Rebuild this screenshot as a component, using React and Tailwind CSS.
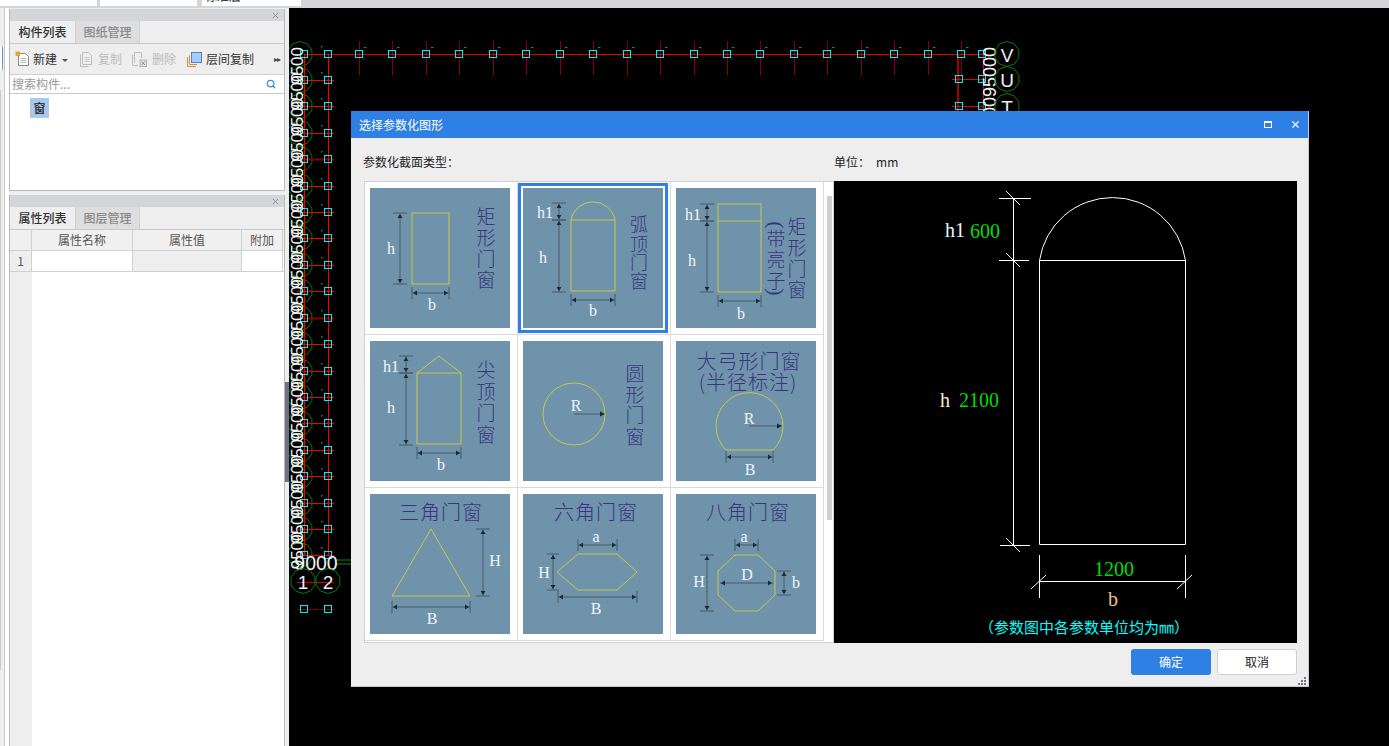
import React from 'react';
import { Search, X } from 'lucide-react';

const UI = { fontFamily: '"Noto Sans CJK SC", "Liberation Sans", sans-serif' };
const SERIF = '"Liberation Serif", "Noto Sans CJK SC", serif';
const CJK = '"Noto Sans CJK SC", sans-serif';

const YEL = '#c9c84a';
const DIM = '#465c6b';
const HEAD = '#1c2a30';

// dimension line, horizontal, with ticks and arrow heads
const HDim = ({ x1, x2, y, t = 6 }) => (
  <g>
    <line x1={x1} x2={x1} y1={y - t} y2={y + t} stroke={DIM} />
    <line x1={x2} x2={x2} y1={y - t} y2={y + t} stroke={DIM} />
    <line x1={x1} x2={x2} y1={y} y2={y} stroke={DIM} />
    <polygon points={`${x1 + 1},${y} ${x1 + 5},${y - 2.5} ${x1 + 5},${y + 2.5}`} fill={HEAD} />
    <polygon points={`${x2 - 1},${y} ${x2 - 5},${y - 2.5} ${x2 - 5},${y + 2.5}`} fill={HEAD} />
  </g>
);

const VDim = ({ x, y1, y2, t = 7 }) => (
  <g>
    <line x1={x - t} x2={x + t} y1={y1} y2={y1} stroke={DIM} />
    <line x1={x - t} x2={x + t} y1={y2} y2={y2} stroke={DIM} />
    <line x1={x} x2={x} y1={y1} y2={y2} stroke={DIM} />
    <polygon points={`${x},${y1 + 1} ${x - 2.5},${y1 + 5} ${x + 2.5},${y1 + 5}`} fill={HEAD} />
    <polygon points={`${x},${y2 - 1} ${x - 2.5},${y2 - 5} ${x + 2.5},${y2 - 5}`} fill={HEAD} />
  </g>
);

const L = ({ x, y, children, size = 16 }) => (
  <text x={x} y={y} fill="#f2f5f7" fontSize={size} fontFamily={SERIF} textAnchor="middle" dominantBaseline="central">
    {children}
  </text>
);

// purple caption; one glyph per y when stacked
const Cap = ({ x, ys, chars, size = 19 }) => (
  <g fill="#39357f" fontSize={size} fontFamily={CJK} fontWeight="300" textAnchor="middle" dominantBaseline="central">
    {chars.split('').map((c, i) => (
      <text key={i} x={x} y={ys[i]}>{c}</text>
    ))}
  </g>
);

const Title = ({ x, y, children, size = 20 }) => (
  <text x={x} y={y} fill="#39357f" fontSize={size} fontFamily={CJK} fontWeight="300" textAnchor="middle" dominantBaseline="central" letterSpacing="1">
    {children}
  </text>
);

const tiles = [
  <g key="a">
    <rect x="42" y="25" width="37" height="71" fill="none" stroke={YEL} />
    <VDim x={30} y1={25} y2={96} />
    <L x={21} y={60}>h</L>
    <HDim x1={42} x2={79} y={105} />
    <L x={62} y={116}>b</L>
    <Cap x={116} ys={[27, 48, 69, 90]} chars="矩形门窗" />
  </g>,
  <g key="b">
    <path d="M48 32 A22.4 22.4 0 0 1 92 32 V103 H48 Z M48 32 H92" fill="none" stroke={YEL} />
    <VDim x={36} y1={15} y2={32} />
    <VDim x={36} y1={32} y2={104} />
    <L x={22} y={24}>h1</L>
    <L x={20} y={69}>h</L>
    <HDim x1={48} x2={92} y={112} />
    <L x={70} y={122}>b</L>
    <Cap x={116} ys={[35, 55, 73, 92]} chars="弧顶门窗" size={18} />
  </g>,
  <g key="c">
    <path d="M42 16 H85 V104 H42 Z M42 33 H85" fill="none" stroke={YEL} />
    <VDim x={31} y1={16} y2={33} />
    <VDim x={31} y1={33} y2={104} />
    <L x={17} y={26}>h1</L>
    <L x={16} y={72}>h</L>
    <HDim x1={42} x2={85} y={113} />
    <L x={65} y={125}>b</L>
    <Cap x={121} ys={[37, 58, 79, 100]} chars="矩形门窗" />
    <Cap x={100} ys={[49, 70, 91]} chars="带亮子" />
    <text x="100" y="37" transform="rotate(90 100 37)" fill="#39357f" fontSize="22" fontFamily={SERIF} textAnchor="middle" dominantBaseline="central">(</text>
    <text x="100" y="104" transform="rotate(90 100 104)" fill="#39357f" fontSize="22" fontFamily={SERIF} textAnchor="middle" dominantBaseline="central">)</text>
  </g>,
  <g key="d">
    <path d="M47 32 L69 15 L91 32 V103 H47 Z M47 32 H91" fill="none" stroke={YEL} />
    <VDim x={36} y1={15} y2={32} />
    <VDim x={36} y1={32} y2={104} />
    <L x={21} y={25}>h1</L>
    <L x={21} y={66}>h</L>
    <HDim x1={47} x2={91} y={112} />
    <L x={71} y={123}>b</L>
    <Cap x={116} ys={[27, 49, 70, 92]} chars="尖顶门窗" />
  </g>,
  <g key="e">
    <circle cx="51" cy="73" r="31" fill="none" stroke={YEL} />
    <L x={53} y={64}>R</L>
    <line x1="51" x2="80" y1="73" y2="73" stroke={DIM} />
    <polygon points="82,73 77,70.5 77,75.5" fill={HEAD} />
    <Cap x={112} ys={[31, 52, 72, 94]} chars="圆形门窗" />
  </g>,
  <g key="f">
    <path d="M50 109 A33.5 33.5 0 1 1 97 109 Z" fill="none" stroke={YEL} />
    <L x={73} y={77}>R</L>
    <line x1="73" x2="104" y1="85" y2="85" stroke={DIM} />
    <polygon points="106,85 101,82.5 101,87.5" fill={HEAD} />
    <HDim x1={50} x2={97} y={116} />
    <L x={74} y={128}>B</L>
    <Title x={73} y={19}>大弓形门窗</Title>
    <Title x={72} y={40}>(半径标注)</Title>
  </g>,
  <g key="g">
    <polygon points="61,35 100,102 22,102" fill="none" stroke={YEL} />
    <VDim x={113} y1={35} y2={102} />
    <L x={125} y={66}>H</L>
    <HDim x1={22} x2={100} y={113} />
    <L x={62} y={124}>B</L>
    <Title x={71} y={17}>三角门窗</Title>
  </g>,
  <g key="h">
    <polygon points="34,78 55,60 94,60 114,78 94,96 55,96" fill="none" stroke={YEL} />
    <HDim x1={55} x2={94} y={51} />
    <L x={73} y={42}>a</L>
    <VDim x={30} y1={60} y2={96} t={6} />
    <L x={21} y={78}>H</L>
    <HDim x1={35} x2={114} y={103} />
    <L x={73} y={114}>B</L>
    <Title x={73} y={17}>六角门窗</Title>
  </g>,
  <g key="i">
    <polygon points="59,61 82,61 99,77 99,101 82,117 59,117 42,101 42,77" fill="none" stroke={YEL} />
    <HDim x1={59} x2={82} y={51} />
    <L x={68} y={42}>a</L>
    <VDim x={31} y1={61} y2={117} />
    <L x={23} y={87}>H</L>
    <L x={71} y={80}>D</L>
    <HDim x1={44} x2={97} y={89} t={0} />
    <VDim x={108} y1={77} y2={101} />
    <L x={120} y={88}>b</L>
    <Title x={72} y={17}>八角门窗</Title>
  </g>,
];

const topXs = Array.from({ length: 19 }, (_, i) => Math.round(359 + i * 33.45));
const rowYs = Array.from({ length: 20 }, (_, i) => Math.round(53.5 + i * 26.42));

const ngon = (cx, cy, r, n = 10) =>
  Array.from({ length: n }, (_, i) => {
    const a = (i / n) * Math.PI * 2 + Math.PI / n;
    return `${cx + r * Math.cos(a)},${cy + r * Math.sin(a)}`;
  }).join(' ');

const Sq = ({ x, y }) => (
  <rect x={x - 3.5} y={y - 3.5} width="7" height="7" fill="none" stroke="#00f0f8" strokeWidth="1" shapeRendering="crispEdges" />
);

const Bubble = ({ x, y, label }) => (
  <g>
    <polygon points={ngon(x, y, 12.5)} fill="none" stroke="#0a7a0a" />
    <text x={x} y={y + 1} fill="#eee" fontSize="19" fontFamily='"Liberation Sans", sans-serif' textAnchor="middle" dominantBaseline="central">
      {label}
    </text>
  </g>
);

const CadPlan = () => (
  <svg className="block h-full w-full" viewBox="289 8 1100 738">
    {/* axis bubbles on the left */}
    {rowYs.map((y) => (
      <polygon key={y} points={ngon(300, y, 12.5)} fill="none" stroke="#0a7a0a" />
    ))}
    {/* top row */}
    {topXs.map((x) => (
      <line key={x} x1={x + 0.5} x2={x + 0.5} y1="41" y2="75" stroke="#860000" />
    ))}
    <line x1="304" x2="985" y1="54.5" y2="54.5" stroke="#e00000" />
    {/* row lines */}
    {rowYs.slice(1).map((y, i) => (
      <line key={y} x1="297" x2="334" y1={y + 0.5} y2={y + 0.5} stroke={i === 3 || i === 9 ? '#8a0000' : '#f00000'} strokeWidth={i === 3 || i === 9 ? 2 : 1} />
    ))}
    <line x1="304.5" x2="304.5" y1="54" y2="556" stroke="#f00000" />
    <line x1="328.5" x2="328.5" y1="54" y2="556" stroke="#f00000" />
    <line x1="958" x2="958" y1="54" y2="112" stroke="#a00000" strokeWidth="2" />
    <line x1="983.5" x2="983.5" y1="54" y2="112" stroke="#d00000" />
    <line x1="952" x2="985" y1="79.5" y2="79.5" stroke="#e00000" />
    <line x1="952" x2="985" y1="106.5" y2="106.5" stroke="#e00000" />
    {/* column markers */}
    {rowYs.map((y) => (
      <g key={y}>
        <Sq x={304} y={y} />
        <Sq x={328} y={y} />
        <rect x="321" y={y - 8} width="1.5" height="1.5" fill="#0d8a8a" />
      </g>
    ))}
    {topXs.map((x) => (
      <g key={x}>
        <Sq x={x} y={54} />
        <rect x={x + 5} y="47" width="2.5" height="1" fill="#0d8a8a" />
      </g>
    ))}
    <Sq x={982} y={54} />
    <Sq x={959} y={79} />
    <Sq x={982} y={79} />
    <Sq x={959} y={106} />
    <Sq x={982} y={106} />
    {/* rotated dimension text */}
    <g fill="#f2f2f2" fontSize="17" fontFamily='"Liberation Sans", sans-serif' textAnchor="end">
      {rowYs.map((y, i) => (
        <text key={y} x="303" y={47 + i * 25.5} transform={`rotate(-90 303 ${47 + i * 25.5})`}>9500</text>
      ))}
      <text x="996" y="47" fontSize="18" transform="rotate(-90 996 47)">9500095000</text>
    </g>
    {/* bottom end */}
    <line x1="335" x2="351" y1="560" y2="560" stroke="#0a8a0a" />
    <line x1="335" x2="351" y1="564" y2="564" stroke="#0a8a0a" />
    <text x="316" y="570" fill="#f2f2f2" fontSize="19.5" fontFamily='"Liberation Sans", sans-serif' textAnchor="middle">9000</text>
    <line x1="297" x2="334" y1="582.5" y2="582.5" stroke="#d00000" />
    <Bubble x={303} y={581} label="1" />
    <Bubble x={328} y={581} label="2" />
    <line x1="297" x2="335" y1="609.5" y2="609.5" stroke="#700000" />
    <Sq x={304} y={609} />
    <Sq x={328} y={609} />
    <Bubble x={1007} y={54} label="V" />
    <Bubble x={1007} y={79} label="U" />
    <Bubble x={1007} y={106} label="T" />
  </svg>
);

const Preview = () => (
  <svg className="block h-full w-full" viewBox="834 181 463 462">
    <g stroke="#fff" fill="none">
      <path d="M1039.5 260.5 A73.8 73.8 0 0 1 1185.5 260.5" />
      <path d="M1039.5 260.5 H1185.5 V544.5 H1039.5 Z" />
      <path d="M1013.5 198 V546" />
      <path d="M999 198.5 H1031 M999 260.5 H1029 M1000 545.5 H1030" />
      <path d="M1006 191 L1020 205 M1006 253 L1020 267 M1006 538 L1020 552" />
      <path d="M1039.5 581.5 H1185.5 M1039.5 555 V598 M1185.5 555 V598" />
      <path d="M1031 589 L1046 575 M1177 589 L1192 575" />
    </g>
    <g fontFamily={SERIF} fontSize="20" dominantBaseline="central">
      <text x="945" y="230" fill="#e8f4ff">h1</text>
      <text x="970" y="231" fill="#00dc00">600</text>
      <text x="940" y="400" fill="#ffe9c8">h</text>
      <text x="959" y="400" fill="#00dc00">2100</text>
      <text x="1094" y="569" fill="#00dc00">1200</text>
      <text x="1108" y="599" fill="#f2c08a">b</text>
    </g>
    <text x="1084" y="626" fill="#00ffff" fontSize="15" fontFamily={CJK} textAnchor="middle" dominantBaseline="central">
      （参数图中各参数单位均为㎜）
    </text>
  </svg>
);

const PanelHead = () => (
  <div className="flex h-[12px] items-center justify-end bg-[#d3d5d9] pr-[4px]">
    <X size={9} strokeWidth={2.5} className="text-[#8a8f96]" />
  </div>
);

const Tabs = ({ active, other }) => (
  <div className="flex h-[23px] border-b border-[#c9c9c9] bg-[#eeeeee] text-[12px] font-medium">
    <div className="flex w-[65px] items-center justify-center text-[#333]">{active}</div>
    <div className="flex w-[65px] items-center justify-center border-x border-[#d0d0d0] bg-[#dedede] text-[#8a8a8a]">{other}</div>
  </div>
);

const ToolIcon = ({ kind }) => {
  if (kind === 'new') {
    return (
      <svg width="15" height="16" viewBox="0 0 15 16">
        <path d="M3.5 2.5 H10.5 L13.5 5.5 V14.5 H3.5 Z" fill="#fff" stroke="#8a8a8a" />
        <path d="M5.5 7.5 H11.5 M5.5 9.5 H11.5 M5.5 11.5 H11.5" stroke="#b5b5b5" />
        <rect x="0.5" y="0.5" width="4.5" height="4.5" fill="#f0a030" />
      </svg>
    );
  }
  if (kind === 'copy') {
    return (
      <svg width="13" height="15" viewBox="0 0 13 15">
        <path d="M0.5 2.5 V14.5 H8.5 M2.5 0.5 H8.5 L11.5 3.5 V12.5 H2.5 Z" fill="none" stroke="#bdbdbd" />
        <path d="M4.5 5.5 H9.5 M4.5 7.5 H9.5 M4.5 9.5 H9.5" stroke="#c8c8c8" />
      </svg>
    );
  }
  if (kind === 'del') {
    return (
      <svg width="15" height="15" viewBox="0 0 15 15">
        <path d="M0.5 2.5 V13.5 H6 M2.5 0.5 H9.5 V6 M2.5 0.5 V11" fill="none" stroke="#bdbdbd" />
        <rect x="8" y="8" width="6.5" height="6.5" fill="#e2e2e2" stroke="#b5b5b5" />
        <path d="M9.5 9.5 L13 13 M13 9.5 L9.5 13" stroke="#8f8f8f" />
      </svg>
    );
  }
  return (
    <svg width="15" height="15" viewBox="0 0 15 15">
      <path d="M0.5 5 V14.5 H9 M2.5 3.5 V12.5 H10" fill="none" stroke="#e08a3c" />
      <rect x="4.5" y="0.5" width="10" height="10" fill="#a9cdf2" stroke="#4f86c6" />
    </svg>
  );
};

const Sidebar = () => (
  <div className="flex w-[289px] shrink-0 bg-[#eeeeee]">
    <div className="flex w-[5px] shrink-0 flex-col border-r border-[#c9c9c9] bg-[#eeeeee] pt-[38px]">
      <div className="h-[24px] w-[3px] rounded-r-[2px] border-r border-[#5b9bd5] bg-white" />
      <div className="mt-[20px] h-[580px] w-px bg-[#c9c9c9]" />
    </div>
    <div className="w-[4px] shrink-0 bg-white" />
    <div className="flex w-[276px] shrink-0 flex-col pt-px">
      {/* component list */}
      <div className="flex h-[182px] flex-col border-x border-b border-[#b9b9b9] bg-white">
        <PanelHead />
        <Tabs active="构件列表" other="图纸管理" />
        <div className="flex h-[31px] items-center border-b border-[#d0d0d0] bg-[#eeeeee] pl-[5px] text-[12px]">
          <ToolIcon kind="new" />
          <span className="ml-[3px] text-[#333]">新建</span>
          <span className="ml-[5px] mt-[2px] h-0 w-0 border-x-[3px] border-t-[3px] border-x-transparent border-t-[#555]" />
          <span className="ml-[12px] flex"><ToolIcon kind="copy" /></span>
          <span className="ml-[5px] text-[#bdbdbd]">复制</span>
          <span className="ml-[10px] flex"><ToolIcon kind="del" /></span>
          <span className="ml-[5px] text-[#bdbdbd]">删除</span>
          <span className="ml-[11px] flex"><ToolIcon kind="copyLayer" /></span>
          <span className="ml-[4px] text-[#333]">层间复制</span>
          <span className="ml-[20px] text-[8px] tracking-[-1px] text-[#444]">▸▸</span>
        </div>
        <div className="flex h-[19px] items-center justify-between border-b border-[#c9c9c9] bg-white pl-[2px] pr-[8px] text-[12px] text-[#999]">
          <span>搜索构件...</span>
          <Search size={10} strokeWidth={3} className="text-[#3f8fd0]" />
        </div>
        <div className="flex-1 pl-[20px] pt-[4px] text-[12px]">
          <div className="flex h-[20px] w-[19px] items-center justify-center bg-[#aac8ec] font-medium text-[#222]">窗</div>
        </div>
      </div>
      {/* properties */}
      <div className="mt-[4px] flex flex-1 flex-col border-x border-[#b9b9b9] bg-white">
        <PanelHead />
        <Tabs active="属性列表" other="图层管理" />
        <div className="flex h-[21px] border-b border-[#d0d0d0] bg-[#f0f0f0] text-center text-[12px] leading-[20px] text-[#555]">
          <div className="w-[22px] border-r border-[#d0d0d0]" />
          <div className="w-[101px] border-r border-[#d0d0d0]">属性名称</div>
          <div className="w-[109px] border-r border-[#d0d0d0]">属性值</div>
          <div className="w-[41px] border-r border-[#d0d0d0]">附加</div>
        </div>
        <div className="flex h-[21px] border-b border-[#d0d0d0] text-center text-[12px] leading-[20px] text-[#555]">
          <div className="w-[22px] border-r border-[#d0d0d0] bg-[#eeeeee]">1</div>
          <div className="w-[101px] border-r border-[#d0d0d0] bg-white" />
          <div className="w-[109px] border-r border-[#d0d0d0] bg-[#eeeeee]" />
          <div className="w-[41px] border-r border-[#d0d0d0] bg-white" />
        </div>
        <div className="w-[22px] flex-1 bg-[#eeeeee]" />
      </div>
    </div>
    {/* splitter */}
    <div className="flex w-[4px] shrink-0 flex-col pt-[374px]">
      <div className="h-[100px] bg-[#6b7280]" />
    </div>
  </div>
);

const Dialog = () => (
  <div className="absolute left-[62px] top-[103px] flex h-[576px] w-[958px] flex-col border-b border-r border-[#c5cad3] bg-[#eeeeee]">
    <div className="flex h-[27px] shrink-0 items-center justify-between bg-[#2f80e4] pl-[8px] pr-[7px] text-[12px] text-white">
      <span>选择参数化图形</span>
      <div className="flex items-center gap-[18px]">
        <span className="h-[7px] w-[8px] border border-t-2 border-white" />
        <X size={11} strokeWidth={2.5} />
      </div>
    </div>
    <div className="flex h-[43px] shrink-0 items-center pl-[12px] pt-[4px] text-[12px] text-[#222]">
      <span className="w-[471px]">参数化截面类型：</span>
      <span>单位：</span>
      <span className="ml-[6px]">mm</span>
    </div>
    <div className="ml-[13px] flex h-[462px] w-[933px] shrink-0">
      <div className="flex w-[470px] shrink-0 border border-[#d0d0d0] bg-white">
        <div className="grid h-fit w-[459px] shrink-0 grid-cols-3">
          {tiles.map((tile, i) => (
            <div key={i} className="h-[153px] border-b border-r border-[#d9d9d9] pl-[5px] pt-[6px]">
              <svg
                className={`block h-[140px] w-[140px] bg-[#6f93aa] ${i === 1 ? 'outline-3 outline-offset-2 outline-[#2f80e4]' : ''}`}
                viewBox="0 0 140 140"
              >
                {tile}
              </svg>
            </div>
          ))}
        </div>
        <div className="flex-1 pl-[3px] pr-px pt-[14px]">
          <div className="h-[324px] bg-[#cfcfcf]" />
        </div>
      </div>
      <div className="h-full w-[463px] shrink-0 bg-black">
        <Preview />
      </div>
    </div>
    <div className="relative flex flex-1 items-start justify-end gap-[6px] pr-[11px] pt-[6px] text-[12px]">
      <button className="h-[26px] w-[80px] rounded-[3px] bg-[#2f80e4] text-white">确定</button>
      <button className="h-[26px] w-[80px] rounded-[3px] border border-[#cfcfcf] bg-white text-[#222]">取消</button>
      <div className="absolute bottom-[1px] right-[2px] grid grid-cols-3 gap-px">
        {[0, 1, 2, 3, 4, 5, 6, 7, 8].map((n) => (
          <span key={n} className={`h-[2px] w-[2px] ${[0, 1, 3].includes(n) ? 'bg-transparent' : 'bg-[#777]'}`} />
        ))}
      </div>
    </div>
  </div>
);

export default function App() {
  return (
    <div className="flex h-[746px] w-[1389px] flex-col overflow-hidden bg-black" style={UI}>
      <div className="flex h-[8px] shrink-0 items-start gap-[3px] bg-[#d3d5d9] text-[12px]">
        <div className="h-[6px] w-[97px] overflow-hidden bg-white" />
        <div className="h-[6px] w-[97px] bg-white" />
        <div className="ml-[2px] h-[6px] w-[99px] overflow-hidden bg-white pl-[3px]">
          <div className="-mt-[13px] text-[#222]">标准层</div>
        </div>
      </div>
      <div className="flex min-h-0 flex-1">
        <Sidebar />
        <div className="relative min-w-0 flex-1 bg-black">
          <CadPlan />
          <Dialog />
        </div>
      </div>
    </div>
  );
}
